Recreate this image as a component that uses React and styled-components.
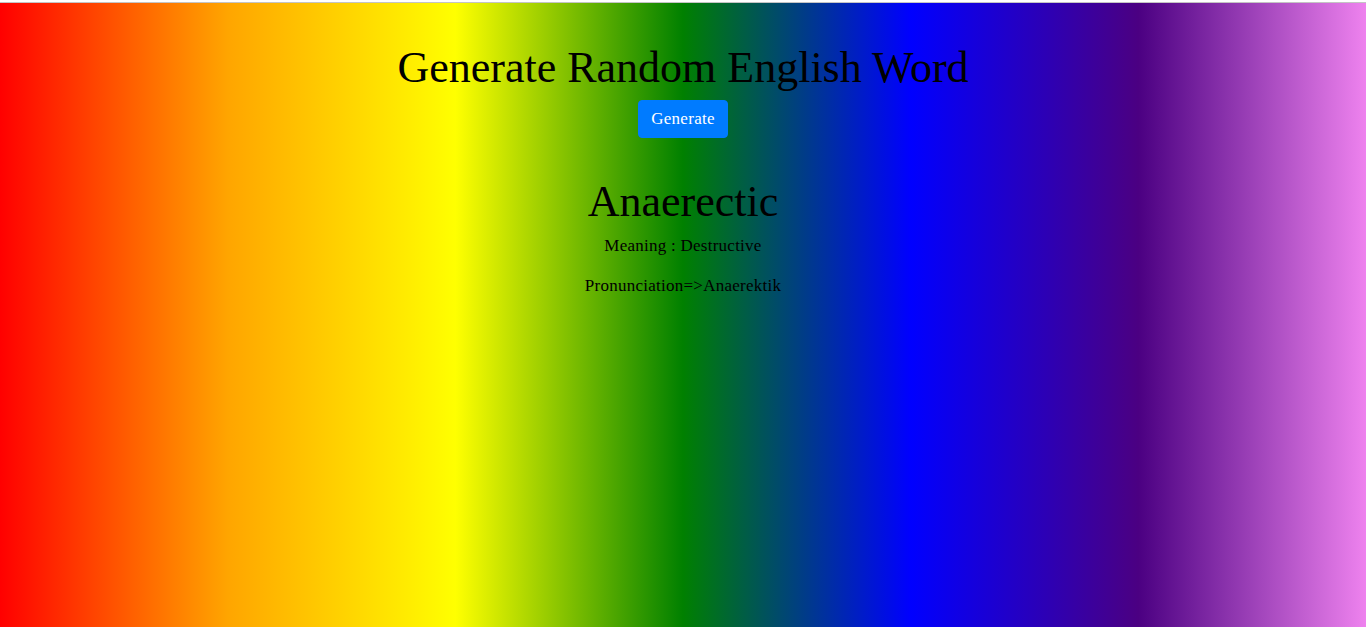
import styled, { createGlobalStyle } from "styled-components";

const GlobalStyle = createGlobalStyle`
  html, body {
    margin: 0;
    padding: 0;
    background: #ffffff;
  }
  body {
    font-family: "Liberation Serif", "DejaVu Serif", serif;
    color: #000000;
  }
`;

const Page = styled.div`
  margin-top: 2px;
  border-top: 1px solid #c4c4c4;
  min-height: calc(100vh - 3px);
  box-sizing: border-box;
  background: linear-gradient(
    to right,
    red,
    orange,
    yellow,
    green,
    blue,
    indigo,
    violet
  );
  display: flex;
  flex-direction: column;
  align-items: center;
  padding-top: 41px;
  text-align: center;
`;

const Title = styled.h1`
  margin: 0 0 8px;
  font-size: 44px;
  font-weight: 400;
  line-height: 48px;
`;

const Button = styled.button`
  font-family: inherit;
  font-size: 17px;
  line-height: 24px;
  letter-spacing: 0.3px;
  padding: 6px 12px;
  color: #ffffff;
  background-color: #007bff;
  border: 1px solid #007bff;
  border-radius: 4px;
  cursor: pointer;
`;

const Result = styled.div`
  margin-top: 40px;
  display: flex;
  flex-direction: column;
  align-items: center;
`;

const Word = styled.h1`
  margin: 0 0 8px;
  font-size: 44px;
  font-weight: 400;
  line-height: 48px;
`;

const Line = styled.p`
  margin: 0 0 16px;
  font-size: 17px;
  line-height: 24px;
  letter-spacing: 0.25px;
`;

export default function App() {
  return (
    <>
      <GlobalStyle />
      <Page>
        <Title>Generate Random English Word</Title>
        <Button type="button">Generate</Button>
        <Result>
          <Word>Anaerectic</Word>
          <Line>Meaning : Destructive</Line>
          <Line>Pronunciation=&gt;Anaerektik</Line>
        </Result>
      </Page>
    </>
  );
}
